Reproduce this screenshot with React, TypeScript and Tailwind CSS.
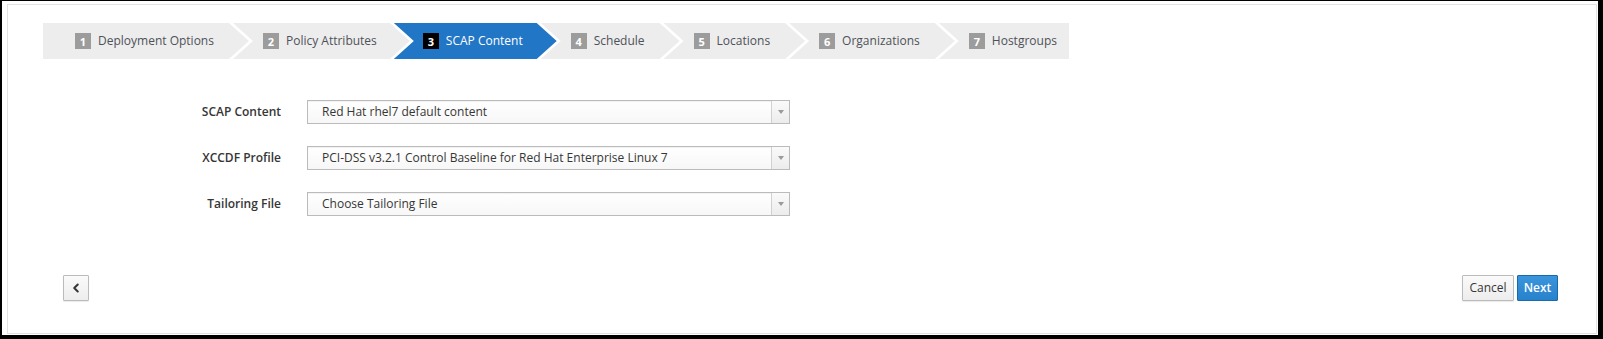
import { ChevronLeft } from "lucide-react";

const STEPS = [
  "Deployment Options",
  "Policy Attributes",
  "SCAP Content",
  "Schedule",
  "Locations",
  "Organizations",
  "Hostgroups",
];
const ACTIVE = 2;

// chevron shapes: first has no notch, last has no arrow
const shapeFirst =
  "[clip-path:polygon(0_0,calc(100%_-_20px)_0,100%_50%,calc(100%_-_20px)_100%,0_100%)] pl-[32px] pr-[35px]";
const shapeBeforeActive =
  "[clip-path:polygon(0_0,calc(100%_-_20px)_0,100%_50%,calc(100%_-_20px)_100%,0_100%,20px_50%)] pl-[30px] pr-[33px] -ml-[16px]";
const shapeActive =
  "[clip-path:polygon(0_0,calc(100%_-_20px)_0,100%_50%,calc(100%_-_20px)_100%,0_100%,20px_50%)] pl-[29px] pr-[34px] -ml-[16px]";
const shapeMiddle =
  "[clip-path:polygon(0_0,calc(100%_-_20px)_0,100%_50%,calc(100%_-_20px)_100%,0_100%,20px_50%)] pl-[30px] pr-[35px] -ml-[16px]";
const shapeLast =
  "[clip-path:polygon(0_0,100%_0,100%_100%,0_100%,20px_50%)] pl-[30px] pr-[12px] -ml-[16px]";

function Steps() {
  return (
    <div className="flex pl-[35px] mt-[18px]">
      {STEPS.map((label, i) => {
        let shape = shapeMiddle;
        if (i === 0) shape = shapeFirst;
        else if (i === STEPS.length - 1) shape = shapeLast;
        else if (i === ACTIVE) shape = shapeActive;
        else if (i === ACTIVE - 1) shape = shapeBeforeActive;
        const active = i === ACTIVE;
        return (
          <div
            key={label}
            className={`h-[36px] flex items-center shrink-0 ${shape} ${
              active ? "bg-[#2276c6] text-white" : "bg-[#ededed] text-[#4d5258]"
            }`}
          >
            <span
              className={`w-[16px] h-[16px] flex items-center justify-center text-[11px] font-bold leading-none text-white ${
                active ? "bg-black" : "bg-[#9c9c9c]"
              }`}
            >
              {i + 1}
            </span>
            <span className="ml-[7px] text-[12px] whitespace-nowrap">{label}</span>
          </div>
        );
      })}
    </div>
  );
}

function Select({ value }: { value: string }) {
  return (
    <div className="w-[483px] h-[24px] flex border border-[#bbbbbb] bg-gradient-to-b from-white to-[#f7f7f7] shadow-[inset_0_1px_1px_rgba(0,0,0,0.06)]">
      <div className="flex-1 flex items-center pl-[14px] text-[12px] text-[#363636] whitespace-nowrap">
        {value}
      </div>
      <div className="w-[18px] flex items-center justify-center border-l border-[#d1d1d1] bg-gradient-to-b from-[#fafafa] to-[#ececec]">
        <span className="w-0 h-0 border-l-[3px] border-r-[3px] border-t-[4px] border-l-transparent border-r-transparent border-t-[#9a9a9a]" />
      </div>
    </div>
  );
}

function Row({ label, value }: { label: string; value: string }) {
  return (
    <div className="flex items-center">
      <div className="w-[273px] text-right text-[12px] font-semibold text-[#363636] pr-[26px] box-content">
        {label}
      </div>
      <Select value={value} />
    </div>
  );
}

export default function App() {
  return (
    <div
      className="w-[1603px] h-[339px] bg-black pt-[1px] pl-[2px] pr-[5px] pb-[4px]"
      style={{ fontFamily: '"Open Sans", "Liberation Sans", sans-serif' }}
    >
      <div className="h-full bg-white pl-[5px] pt-[3px] pr-[1px] pb-[1px]">
        <div className="h-full border border-[#e2e2e2] flex flex-col">
          <Steps />

          {/* form */}
          <div className="mt-[41px] flex flex-col gap-[22px]">
            <Row label="SCAP Content" value="Red Hat rhel7 default content" />
            <Row label="XCCDF Profile" value="PCI-DSS v3.2.1 Control Baseline for Red Hat Enterprise Linux 7" />
            <Row label="Tailoring File" value="Choose Tailoring File" />
          </div>

          {/* footer buttons */}
          <div className="mt-[59px] flex items-center pl-[55px] pr-[38px]">
            <button className="w-[26px] h-[26px] flex items-center justify-center border border-[#bbbbbb] rounded-[1px] bg-gradient-to-b from-[#fafafa] to-[#ededed] shadow-[0_1px_1px_rgba(0,0,0,0.08)]">
              <ChevronLeft size={14} strokeWidth={3.5} className="text-[#363636]" />
            </button>
            <div className="flex-1" />
            <button className="w-[52px] h-[26px] border border-[#bbbbbb] rounded-[1px] bg-gradient-to-b from-[#fafafa] to-[#ededed] text-[12px] text-[#363636] shadow-[0_1px_1px_rgba(0,0,0,0.08)]">
              Cancel
            </button>
            <button className="ml-[3px] w-[41px] h-[26px] border border-[#1a6aaa] rounded-[1px] bg-gradient-to-b from-[#3a95dc] to-[#2782cc] text-[12px] font-semibold text-white">
              Next
            </button>
          </div>
        </div>
      </div>
    </div>
  );
}
